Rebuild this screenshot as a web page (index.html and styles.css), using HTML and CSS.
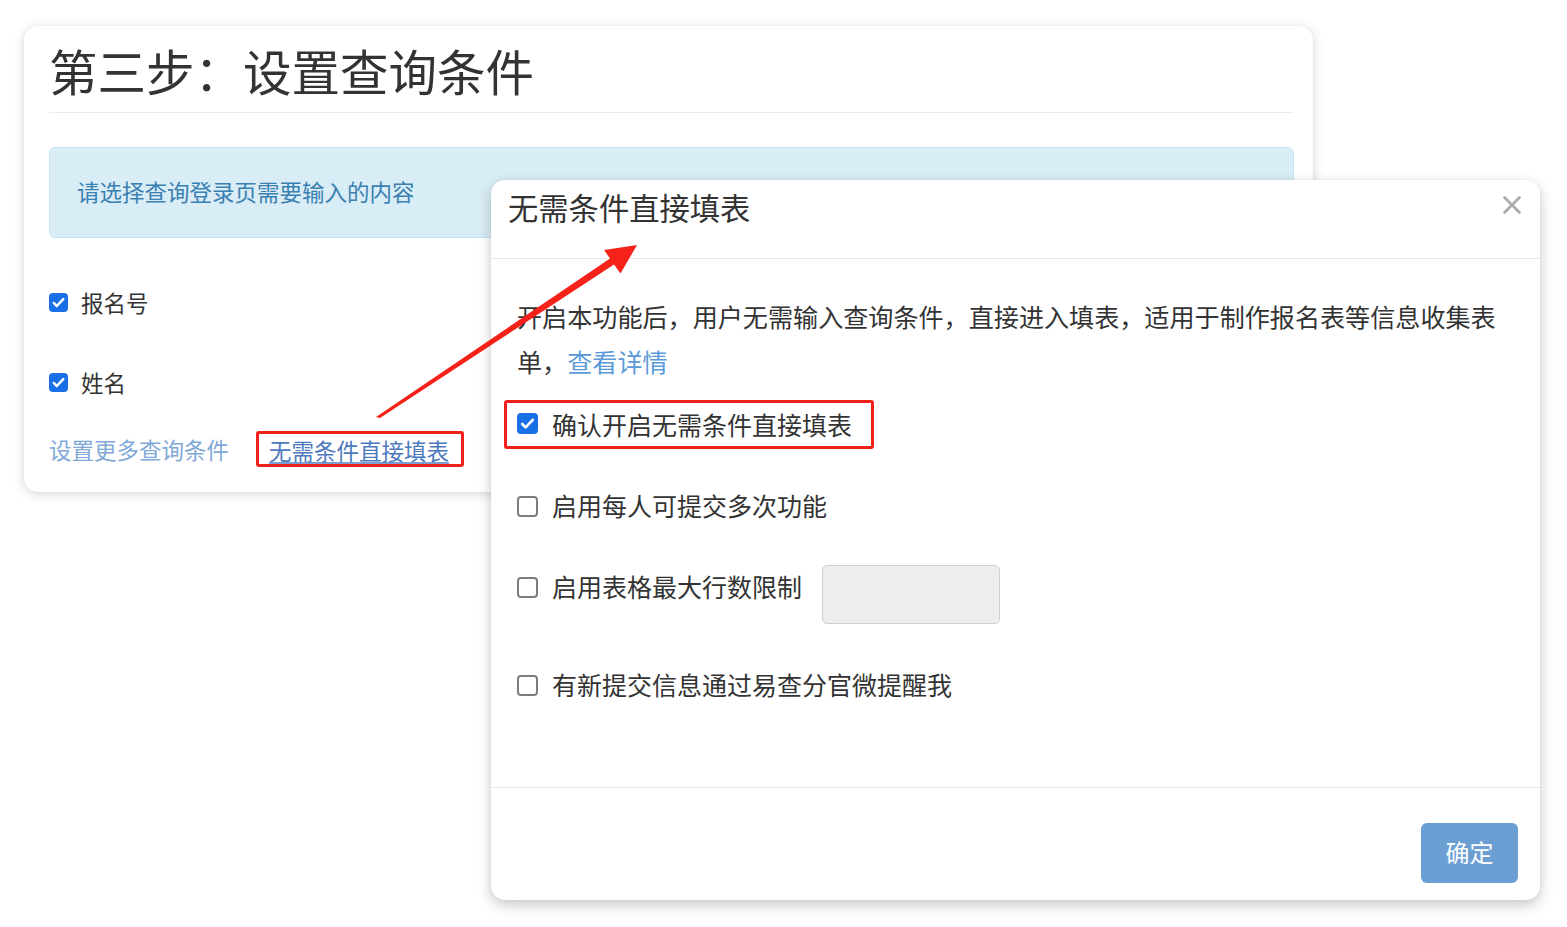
FILE: index.html
```html
<!DOCTYPE html>
<html lang="zh-CN">
<head>
<meta charset="utf-8">
<title>设置查询条件</title>
<link rel="stylesheet" href="styles.css">
</head>
<body>
<div class="page">
  <section class="card">
    <h1 class="card-title">第三步：设置查询条件</h1>
    <hr class="divider">
    <div class="alert">请选择查询登录页需要输入的内容</div>
    <label class="field">
      <span class="cb cb-sm checked"><svg viewBox="0 0 20 20"><path d="M5 10.5l3.2 3.2L15 6.5" fill="none" stroke="#fff" stroke-width="2.6" stroke-linecap="round" stroke-linejoin="round"/></svg></span>
      <span class="field-text">报名号</span>
    </label>
    <label class="field field-gap">
      <span class="cb cb-sm checked"><svg viewBox="0 0 20 20"><path d="M5 10.5l3.2 3.2L15 6.5" fill="none" stroke="#fff" stroke-width="2.6" stroke-linecap="round" stroke-linejoin="round"/></svg></span>
      <span class="field-text">姓名</span>
    </label>
    <div class="links">
      <a class="link link-light" href="#">设置更多查询条件</a>
      <span class="mark-box"><a class="link link-active" href="#">无需条件直接填表</a></span>
      <a class="link link-muted" href="#">：</a>
    </div>
  </section>

  <div class="modal">
    <div class="modal-header">
      <h2 class="modal-title">无需条件直接填表</h2>
      <span class="close"><svg viewBox="0 0 20 20"><path d="M2.5 2.5L17.5 17.5M17.5 2.5L2.5 17.5" stroke="#ababab" stroke-width="2.8" stroke-linecap="round"/></svg></span>
    </div>
    <div class="modal-body">
      <p class="desc">开启本功能后，用户无需输入查询条件，直接进入填表，适用于制作报名表等信息收集表单，<a class="link-detail" href="#">查看详情</a></p>
      <label class="opt opt-marked">
        <span class="cb checked"><svg viewBox="0 0 20 20"><path d="M5 10.5l3.2 3.2L15 6.5" fill="none" stroke="#fff" stroke-width="2.6" stroke-linecap="round" stroke-linejoin="round"/></svg></span>
        <span class="opt-text">确认开启无需条件直接填表</span>
      </label>
      <label class="opt opt-2">
        <span class="cb"></span>
        <span class="opt-text">启用每人可提交多次功能</span>
      </label>
      <div class="opt opt-3">
        <label class="opt-inner">
          <span class="cb"></span>
          <span class="opt-text">启用表格最大行数限制</span>
        </label>
        <span class="num-input"></span>
      </div>
      <label class="opt opt-4">
        <span class="cb"></span>
        <span class="opt-text">有新提交信息通过易查分官微提醒我</span>
      </label>
    </div>
    <div class="modal-footer">
      <button class="btn-ok" type="button">确定</button>
    </div>
  </div>

  <svg class="arrow" viewBox="0 0 1567 927" width="1567" height="927">
    <polygon points="376,417 380,418 614,264.5 620.5,273.5 637,245 604,250 610,258.5" fill="#f5221a"/>
  </svg>
</div>
</body>
</html>
```

FILE: styles.css
```css
* { box-sizing: border-box; }

html, body {
  margin: 0;
  padding: 0;
  background: #ffffff;
}

body {
  font-family: "Noto Sans CJK SC", "Noto Sans", sans-serif;
  color: #333333;
  width: 1567px;
  height: 927px;
  overflow: hidden;
}

.page {
  position: relative;
  width: 1567px;
  height: 927px;
  padding: 26px 0 0 24px;
}

/* ---------- back card ---------- */
.card {
  width: 1289px;
  padding: 18px 19px 25px 25px;
  background: #fff;
  border-radius: 14px;
  box-shadow: 0 2px 12px rgba(0, 0, 0, 0.16), 0 0 2px rgba(0, 0, 0, 0.06);
  display: flex;
  flex-direction: column;
}

.card-title {
  margin: 0;
  font-size: 48.5px;
  line-height: 53px;
  font-weight: 400;
  color: #333;
}

.divider {
  margin: 15px 0 0;
  border: 0;
  height: 1px;
  background: #ececec;
}

.alert {
  margin-top: 34px;
  height: 91px;
  padding-left: 27px;
  padding-bottom: 3px;
  display: flex;
  align-items: center;
  background: #d9edf7;
  border: 1px solid #c4e6f2;
  border-radius: 6px;
  color: #3a80b0;
  font-size: 22.5px;
}

.field {
  margin-top: 49px;
  height: 30px;
  display: flex;
  align-items: center;
  gap: 13px;
}

.field-gap { margin-top: 50px; }

.field-text {
  font-size: 22.5px;
  line-height: 30px;
  color: #333;
}

.links {
  margin-top: 34px;
  height: 36px;
  display: flex;
  align-items: center;
}

.link {
  font-size: 22.5px;
  line-height: 30px;
  text-decoration: none;
}

.link-light { color: #82a8d8; }

.mark-box {
  margin-left: 27px;
  height: 36px;
  padding: 0 12px 0 10px;
  border: 3px solid #f0201a;
  border-radius: 3px;
  display: flex;
  align-items: flex-end;
}

.link-active {
  color: #4d79bd;
  text-decoration: underline;
  text-decoration-color: #7b9fd4;
  text-underline-offset: 2px;
  line-height: 28px;
}

.link-muted {
  margin-left: 25px;
  color: #b8b8b8;
}

/* ---------- checkboxes ---------- */
.cb {
  flex: none;
  width: 21px;
  height: 21px;
  border: 2px solid #7d7d7d;
  border-radius: 4px;
  background: #fff;
  display: inline-flex;
  align-items: center;
  justify-content: center;
}

.cb svg {
  width: 100%;
  height: 100%;
  display: block;
}

.cb.checked {
  border: 0;
  background: #1a6fe6;
}

.cb-sm {
  width: 19px;
  height: 19px;
}

/* ---------- modal ---------- */
.modal {
  position: absolute;
  left: 491px;
  top: 180px;
  width: 1049px;
  height: 720px;
  background: #fff;
  border-radius: 14px;
  box-shadow: 0 5px 14px rgba(0, 0, 0, 0.22), 0 0 2px rgba(0, 0, 0, 0.08);
  display: flex;
  flex-direction: column;
}

.modal-header {
  position: relative;
  height: 79px;
  padding: 7px 0 0 17px;
  border-bottom: 1px solid #e6e6e6;
}

.modal-title {
  margin: 0;
  font-size: 30.3px;
  line-height: 40px;
  font-weight: 400;
  color: #333;
}

.close {
  position: absolute;
  right: 18px;
  top: 15px;
  width: 20px;
  height: 20px;
}

.close svg {
  width: 100%;
  height: 100%;
  display: block;
}

.modal-body {
  flex: 1;
  padding: 35px 36px 0 26px;
  display: flex;
  flex-direction: column;
  align-items: flex-start;
}

.desc {
  margin: 0;
  font-size: 25.1px;
  line-height: 45px;
  color: #333;
}

.link-detail {
  color: #5b9ad8;
  text-decoration: none;
}

.opt {
  display: flex;
  align-items: center;
  gap: 14px;
  height: 30px;
}

.opt-text {
  font-size: 25px;
  line-height: 30px;
  color: #333;
}

.opt-marked {
  margin-top: 16px;
  margin-left: -13px;
  height: 49px;
  padding: 0 19px 2px 10px;
  border: 3px solid #f0201a;
  border-radius: 3px;
}

.opt-2 { margin-top: 42px; }

.opt-3 {
  margin-top: 44px;
  height: 59px;
  align-items: flex-start;
  gap: 20px;
}

.opt-inner {
  margin-top: 7px;
  display: flex;
  align-items: center;
  gap: 14px;
  height: 30px;
}

.num-input {
  width: 178px;
  height: 59px;
  background: #ededed;
  border: 1px solid #cfcfcf;
  border-radius: 5px;
}

.opt-4 { margin-top: 46px; }

.opt-2 .opt-text, .opt-4 .opt-text, .opt-inner .opt-text { margin-top: -2px; }

.modal-footer {
  border-top: 1px solid #e6e6e6;
  padding: 35px 22px 17px 0;
  display: flex;
  justify-content: flex-end;
}

.btn-ok {
  width: 97px;
  height: 60px;
  border: 0;
  border-radius: 6px;
  background: #6b9fd4;
  color: #fff;
  font-family: "Noto Sans CJK SC", "Noto Sans", sans-serif;
  font-size: 24px;
  padding: 0 0 3px;
}

/* ---------- annotation arrow ---------- */
.arrow {
  position: absolute;
  left: 0;
  top: 0;
  pointer-events: none;
}
```
